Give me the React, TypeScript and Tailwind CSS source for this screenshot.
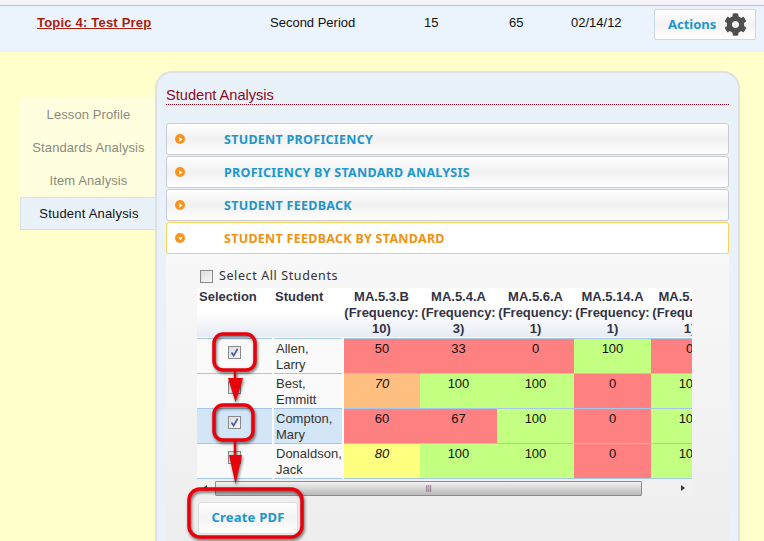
import { FaCog } from "react-icons/fa";

const students = [
  { name: ["Allen,", "Larry"], checked: true, scores: [50, 33, 0, 100, 0] },
  { name: ["Best,", "Emmitt"], checked: false, scores: [70, 100, 100, 0, 100] },
  { name: ["Compton,", "Mary"], checked: true, scores: [60, 67, 100, 0, 100] },
  { name: ["Donaldson,", "Jack"], checked: false, scores: [80, 100, 100, 0, 100] },
];

const standards = [
  ["MA.5.3.B", "10"],
  ["MA.5.4.A", "3"],
  ["MA.5.6.A", "1"],
  ["MA.5.14.A", "1"],
  ["MA.5.14.B", "1"],
];

const scoreClass = (score: number) => {
  if (score >= 100) return "bg-[#c3ff80]";
  if (score >= 80) return "bg-[#ffff80] italic";
  if (score >= 70) return "bg-[#ffbf80] italic";
  return "bg-[#ff8080]";
};

const Checkbox = ({ checked = false }: { checked?: boolean }) => (
  <span className="inline-flex h-[13px] w-[13px] items-center justify-center border border-[#8a8a8a] bg-gradient-to-br from-[#dcdcdc] to-[#f8f8f8]">
    {checked && (
      <svg viewBox="0 0 11 11" className="h-[11px] w-[11px]">
        <path d="M2.5 5.5 L4.6 8.6 L8.6 1.8" fill="none" stroke="#4a5ca8" strokeWidth="1.7" />
      </svg>
    )}
  </span>
);

const AccordionRow = ({ title, open = false }: { title: string; open?: boolean }) => (
  <div
    className={
      open
        ? "flex h-[32px] items-center rounded-[3px] border border-[#fbd25c] bg-white"
        : "mb-[1px] flex h-[32px] items-center rounded-[3px] border border-[#c9ccd2] bg-gradient-to-b from-white via-[#f1f1f1] to-white"
    }
  >
    <span className="ml-[8px] flex h-[10px] w-[10px] items-center justify-center rounded-full bg-[#f7941d]">
      <svg viewBox="0 0 6 6" className="h-[7px] w-[7px]">
        <path d={open ? "M1 2 L5 2 L3 4.5 Z" : "M2 1 L4.5 3 L2 5 Z"} fill="#fff" />
      </svg>
    </span>
    <span
      className={
        open
          ? "ml-[39px] pt-[2px] font-['Noto_Sans',sans-serif] text-[12.5px] font-bold tracking-[0.28px] text-[#f0920f]"
          : "ml-[39px] pt-[2px] font-['Noto_Sans',sans-serif] text-[12.5px] font-bold tracking-[0.28px] text-[#1c97cd]"
      }
    >
      {title}
    </span>
  </div>
);

const SideItem = ({ label }: { label: string }) => (
  <div className="flex h-[33px] items-center justify-center pl-[2px] tracking-[0.1px] text-[#8b8b7b]">{label}</div>
);

const Annotations = () => (
  <svg
    viewBox="0 0 764 541"
    className="pointer-events-none absolute inset-0 h-[541px] w-[764px] drop-shadow-[1px_2px_1.5px_rgba(0,0,0,0.55)]"
    fill="none"
  >
    <rect x="214" y="334" width="41" height="36" rx="9" stroke="#e8000a" strokeWidth="3.5" />
    <rect x="214" y="405" width="39" height="35" rx="9" stroke="#e8000a" strokeWidth="3.5" />
    <rect x="189" y="489" width="113" height="48" rx="11" stroke="#e8000a" strokeWidth="3.5" />
    <path d="M235 370 V380" stroke="#e8000a" strokeWidth="2.5" />
    <path d="M228 378 H243 L235.5 402 Z" fill="#e8000a" />
    <path d="M235 440 V460" stroke="#e8000a" strokeWidth="2.5" />
    <path d="M229 455 H242 L235.5 484 Z" fill="#e8000a" />
  </svg>
);

export default function App() {
  return (
    <div className="relative h-[541px] w-[764px] overflow-hidden bg-[#ffffcc] font-['Liberation_Sans',Arial,sans-serif] text-[13px] text-[#111]">
      {/* top strip */}
      <div className="h-[5px] bg-[#f3f3f8]" />
      <div className="flex h-[47px] items-start border-t border-[#a6c7e8] bg-[#ebf4fd] pl-[37px]">
        <a className="mt-[7px] w-[233px] font-bold tracking-[0.2px] text-[#a8200d] underline">Topic 4: Test Prep</a>
        <span className="mt-[7px] w-[154px]">Second Period</span>
        <span className="mt-[7px] w-[85px]">15</span>
        <span className="mt-[7px] w-[62px]">65</span>
        <span className="mt-[7px] w-[83px]">02/14/12</span>
        <button className="mt-[3px] flex h-[31px] w-[102px] items-center rounded-[2px] border border-[#c8d6ea] bg-gradient-to-b from-white via-[#f3f3f3] to-white pl-[13px]">
          <span className="font-['Noto_Sans',sans-serif] text-[13px] font-bold text-[#1c97cd]">Actions</span>
          <FaCog className="ml-[8px] h-[23px] w-[23px] text-[#4f4f4f]" />
        </button>
      </div>

      <div className="flex pl-[20px] pt-[19px]">
        {/* side nav */}
        <div className="mt-[27px] w-[135px] self-start">
          <div className="bg-[#ffffe0]">
            <SideItem label="Lesson Profile" />
            <SideItem label="Standards Analysis" />
            <SideItem label="Item Analysis" />
          </div>
          <div className="flex h-[33px] items-center justify-center border border-r-0 border-[#dadfe6] bg-[#e9f1f9] pl-[2px] tracking-[0.2px] text-[#111]">
            Student Analysis
          </div>
        </div>

        {/* main panel */}
        <div className="h-[500px] w-[585px] rounded-t-[17px] border-2 border-b-0 border-[#dde1e6] bg-[#e9f1f9] pl-[9px] pr-[9px] pt-[14px]">
          <h2 className="h-[18px] border-b border-dotted border-[#a00018] text-[14.6px] leading-[17px] text-[#8c0a1f]">
            Student Analysis
          </h2>
          <div className="mt-[18px]">
            <AccordionRow title="STUDENT PROFICIENCY" />
            <AccordionRow title="PROFICIENCY BY STANDARD ANALYSIS" />
            <AccordionRow title="STUDENT FEEDBACK" />
            <AccordionRow title="STUDENT FEEDBACK BY STANDARD" open />
            <div className="h-[300px] bg-gradient-to-b from-[#f8f8f8] to-[#ededed] pl-[31px] pt-[14px]">
              <label className="flex h-[17px] items-center pl-[3px] font-['Noto_Sans',sans-serif] text-[12.5px] tracking-[0.6px] text-[#333]">
                <Checkbox />
                <span className="ml-[6px]">Select All Students</span>
              </label>
              <div className="mt-[3px] w-[495px] overflow-hidden">
                <table className="w-[531px] table-fixed border-collapse text-[13px] leading-[16px]">
                  <colgroup>
                    <col className="w-[76px]" />
                    <col className="w-[70px]" />
                    <col className="w-[77px]" />
                    <col className="w-[77px]" />
                    <col className="w-[77px]" />
                    <col className="w-[77px]" />
                    <col className="w-[77px]" />
                  </colgroup>
                  <thead>
                    <tr className="h-[50px] border-b border-[#a6c7e8] bg-gradient-to-b from-white via-white to-[#e6eaf3] align-top font-bold text-[#333344]">
                      <th className="pl-[2px] pt-[1px] text-left font-bold">Selection</th>
                      <th className="pl-[2px] pt-[1px] text-left font-bold">Student</th>
                      {standards.map(([code, freq]) => (
                        <th key={code} className="whitespace-nowrap pt-[1px] text-center font-bold">
                          {code}
                          <br />
                          (Frequency:
                          <br />
                          {freq})
                        </th>
                      ))}
                    </tr>
                  </thead>
                  <tbody>
                    {students.map((s) => (
                      <tr
                        key={s.name[0]}
                        className={
                          s.name[0] === "Compton,"
                            ? "h-[35px] border-b border-[#a6c7e8] bg-[#d3e6f7]"
                            : "h-[35px] border-b border-[#a6c7e8] bg-[#fafafa]"
                        }
                      >
                        <td className="border-r-2 border-white align-top">
                          <div className="flex justify-center pt-[7px]">
                            <Checkbox checked={s.checked} />
                          </div>
                        </td>
                        <td className="border-r-2 border-white pl-[2px] pt-[2px] align-top text-[#333]">
                          {s.name[0]}
                          <br />
                          {s.name[1]}
                        </td>
                        {s.scores.map((score, i) => (
                          <td key={i} className={`p-0 pt-[2px] text-center align-top ${scoreClass(score)}`}>
                            {score}
                          </td>
                        ))}
                      </tr>
                    ))}
                  </tbody>
                </table>
                {/* horizontal scrollbar */}
                <div className="mt-[2px] flex h-[15px] w-[495px] items-center bg-[#f1f1f1]">
                  <span className="ml-[6px] h-0 w-0 border-y-[3px] border-r-[4px] border-y-transparent border-r-[#333]" />
                  <div className="ml-[8px] flex h-[15px] w-[427px] items-center justify-center rounded-[1px] border border-[#8d8d8d] bg-gradient-to-b from-[#f2f2f2] to-[#b9b9b9]">
                    <span className="text-[8px] leading-none text-[#555]">|||</span>
                  </div>
                  <span className="ml-[39px] h-0 w-0 border-y-[3px] border-l-[4px] border-y-transparent border-l-[#333]" />
                </div>
              </div>
              <button className="ml-px mt-[6px] flex h-[32px] w-[100px] items-center justify-center rounded-[3px] border border-[#dcdcdc] bg-gradient-to-b from-white via-[#f3f3f3] to-white font-['Noto_Sans',sans-serif] text-[13px] font-bold tracking-[0.2px] text-[#1c97cd]">
                Create PDF
              </button>
            </div>
          </div>
        </div>
      </div>

      <Annotations />
    </div>
  );
}
